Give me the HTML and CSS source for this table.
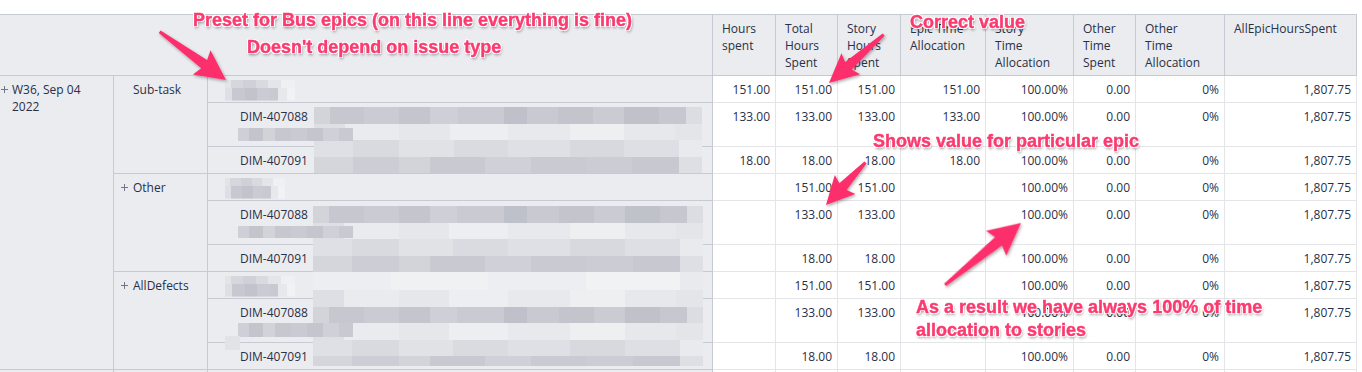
FILE: index.html
```html
<!DOCTYPE html>
<html lang="en">
<head>
<meta charset="utf-8">
<title>Epic hours report</title>
<link rel="stylesheet" href="styles.css">
</head>
<body>
<div class="page">
  <table class="grid">
    <colgroup>
      <col class="c-week"><col class="c-type"><col class="c-issue">
      <col class="c-hs"><col class="c-ths"><col class="c-shs"><col class="c-eta">
      <col class="c-sta"><col class="c-ots"><col class="c-ota"><col class="c-aeh">
    </colgroup>
    <thead>
      <tr>
        <th class="corner" colspan="3"><div class="hd"></div></th>
        <th><div class="hd">Hours<br>spent</div></th>
        <th><div class="hd">Total<br>Hours<br>Spent</div></th>
        <th><div class="hd">Story<br>Hours<br>Spent</div></th>
        <th><div class="hd">Epic Time<br>Allocation</div></th>
        <th><div class="hd">Story<br>Time<br>Allocation</div></th>
        <th><div class="hd">Other<br>Time<br>Spent</div></th>
        <th><div class="hd">Other<br>Time<br>Allocation</div></th>
        <th><div class="hd">AllEpicHoursSpent</div></th>
      </tr>
    </thead>
    <tbody>
      <tr>
        <td class="rh week" rowspan="9"><div class="lbl"><svg class="plus" width="7" height="7" viewBox="0 0 7 7"><path d="M3.5 0v7M0 3.5h7"/></svg><span>W36, Sep 04<br>2022</span></div></td>
        <td class="rh type" rowspan="3"><div class="lbl"><span class="nospace"></span><span>Sub-task</span></div></td>
        <td class="rh issue sum"><span class="smudge"></span></td>
        <td>151.00</td><td>151.00</td><td>151.00</td><td>151.00</td><td>100.00%</td><td>0.00</td><td>0%</td><td>1,807.75</td>
      </tr>
      <tr class="two">
        <td class="rh issue">DIM-407088<br>&nbsp;</td>
        <td>133.00</td><td>133.00</td><td>133.00</td><td>133.00</td><td>100.00%</td><td>0.00</td><td>0%</td><td>1,807.75</td>
      </tr>
      <tr>
        <td class="rh issue">DIM-407091</td>
        <td>18.00</td><td>18.00</td><td>18.00</td><td>18.00</td><td>100.00%</td><td>0.00</td><td>0%</td><td>1,807.75</td>
      </tr>
      <tr>
        <td class="rh type" rowspan="3"><div class="lbl"><svg class="plus" width="7" height="7" viewBox="0 0 7 7"><path d="M3.5 0v7M0 3.5h7"/></svg><span>Other</span></div></td>
        <td class="rh issue sum"><span class="smudge short"></span></td>
        <td></td><td>151.00</td><td>151.00</td><td></td><td>100.00%</td><td>0.00</td><td>0%</td><td>1,807.75</td>
      </tr>
      <tr class="two">
        <td class="rh issue">DIM-407088<br>&nbsp;</td>
        <td></td><td>133.00</td><td>133.00</td><td></td><td>100.00%</td><td>0.00</td><td>0%</td><td>1,807.75</td>
      </tr>
      <tr>
        <td class="rh issue">DIM-407091</td>
        <td></td><td>18.00</td><td>18.00</td><td></td><td>100.00%</td><td>0.00</td><td>0%</td><td>1,807.75</td>
      </tr>
      <tr>
        <td class="rh type" rowspan="3"><div class="lbl"><svg class="plus" width="7" height="7" viewBox="0 0 7 7"><path d="M3.5 0v7M0 3.5h7"/></svg><span>AllDefects</span></div></td>
        <td class="rh issue sum"><span class="smudge"></span></td>
        <td></td><td>151.00</td><td>151.00</td><td></td><td>100.00%</td><td>0.00</td><td>0%</td><td>1,807.75</td>
      </tr>
      <tr class="two">
        <td class="rh issue">DIM-407088<br>&nbsp;</td>
        <td></td><td>133.00</td><td>133.00</td><td></td><td>100.00%</td><td>0.00</td><td>0%</td><td>1,807.75</td>
      </tr>
      <tr>
        <td class="rh issue">DIM-407091</td>
        <td></td><td>18.00</td><td>18.00</td><td></td><td>100.00%</td><td>0.00</td><td>0%</td><td>1,807.75</td>
      </tr>
      <tr>
        <td class="rh week"></td>
        <td class="rh type"></td>
        <td class="rh issue"></td>
        <td></td><td></td><td></td><td></td><td></td><td></td><td></td><td></td>
      </tr>
    </tbody>
  </table>

  <!-- redaction overlays -->
  <div class="veil veil-a">
    <div class="band dark"></div><div class="band light"></div><div class="band soft"></div><div class="band mid"></div>
  </div>
  <div class="veil veil-b">
    <div class="band dark"></div><div class="band light"></div><div class="band soft"></div><div class="band mid"></div>
    <div class="band pale"></div><div class="band light"></div><div class="band dark"></div><div class="band light"></div><div class="band soft"></div><div class="band mid tail"></div>
  </div>
  <div class="line2 l2-a"></div>
  <div class="line2 l2-b"></div>
  <div class="line2 l2-c"></div>
  <div class="speck"></div>

  <!-- annotations -->
  <svg class="arrows" width="1362" height="372" viewBox="0 0 1362 372">
    <defs>
      <filter id="sh" x="-20%" y="-20%" width="140%" height="140%">
        <feDropShadow dx="1" dy="1.5" stdDeviation="1.4" flood-color="#000" flood-opacity="0.35"/>
      </filter>
    </defs>
    <g fill="#fd2f6c" filter="url(#sh)">
      <polygon transform="translate(226 80) rotate(36)" points="-82,-1.5 -27,-5 -30,-15 0,0 -30,15 -27,5 -82,1.5"/>
      <polygon transform="translate(829 83) rotate(138.5)" points="-73,-1.5 -26,-5 -29,-14 0,0 -29,14 -26,5 -73,1.5"/>
      <polygon transform="translate(826 205) rotate(132.9)" points="-58,-1.5 -25,-5 -28,-14 0,0 -28,14 -25,5 -58,1.5"/>
      <polygon transform="translate(1021 223) rotate(-39.2)" points="-98,-1.5 -29,-5.5 -32,-16 0,0 -32,16 -29,5.5 -98,1.5"/>
    </g>
  </svg>
  <div class="note n-preset">Preset for Bus epics (on this line everything is fine)</div>
  <div class="note n-depend">Doesn't depend on issue type</div>
  <div class="note n-correct">Correct value</div>
  <div class="note n-shows">Shows value for particular epic</div>
  <div class="note n-result">As a result we have always 100% of time<br>allocation to stories</div>
</div>
</body>
</html>
```
FILE: styles.css
```css
html, body {
  margin: 0;
  background: #ffffff;
}

body {
  font-family: "Open Sans", "Noto Sans", sans-serif;
  font-size: 12px;
  color: #283046;
}

.page {
  position: relative;
  width: 1362px;
  height: 372px;
  overflow: hidden;
  padding-top: 14px;
  box-sizing: border-box;
}

/* ---------- table ---------- */
.grid {
  border-collapse: separate;
  border-spacing: 0;
  table-layout: fixed;
  width: 1357px;
  border-top: 1px solid #c6cad2;
}

.c-week { width: 114px; }
.c-type { width: 94px; }
.c-issue { width: 505px; }
.c-hs { width: 63px; }
.c-ths { width: 62px; }
.c-shs { width: 63px; }
.c-eta { width: 85px; }
.c-sta { width: 88px; }
.c-ots { width: 62px; }
.c-ota { width: 89px; }
.c-aeh { width: 132px; }

.grid th,
.grid td {
  padding: 5px 5px 4px 5px;
  line-height: 17px;
  height: 17px;
  box-sizing: content-box;
  vertical-align: top;
  white-space: nowrap;
  overflow: hidden;
  text-align: right;
  font-weight: 400;
  border-right: 1px solid #e3e5e9;
  border-bottom: 1px solid #e3e5e9;
  background: #ffffff;
}

.grid th {
  background: #ebecf0;
  text-align: left;
  padding: 5px 4px 4px 9px;
  border-color: #c6cad2;
}

.grid th.corner {
  padding: 5px 0 4px 0;
}

.hd {
  height: 51px;
}

.grid td.rh {
  background: #ebecf0;
  text-align: left;
  border-color: #c6cad2;
}

.grid td.week {
  padding-left: 1px;
  border-right-color: #c6cad2;
}

.grid td.type {
  padding-left: 7px;
}

.grid td.issue {
  padding-left: 32px;
}

.grid td.issue.sum {
  padding-left: 17px;
}

.lbl {
  display: flex;
  align-items: flex-start;
  gap: 4px;
}

.type .lbl {
  gap: 5px;
}

.plus {
  flex: none;
  margin-top: 5px;
  stroke: #707686;
  stroke-width: 1;
  fill: none;
}

.nospace {
  width: 7px;
  flex: none;
}

/* small smudge for a summary row title */
.smudge {
  display: inline-block;
  width: 70px;
  height: 21px;
  margin: -1px 0 -3px;
  vertical-align: top;
  background:
    linear-gradient(90deg, #e3e4e8 0 8%, #d6d7dd 8% 26%, #d0d1d8 26% 45%, #d9dadf 45% 62%, #e4e5e9 62% 80%, #eff0f3 80%) top / 100% 40% no-repeat,
    linear-gradient(90deg, #dedfe4 0 10%, #c7c8d0 10% 28%, #c2c4cc 28% 46%, #cbccd3 46% 64%, #c8cad1 64% 76%, #e7e8ec 76% 88%, #f1f2f4 88%) bottom / 100% 60% no-repeat;
}

.smudge.short {
  width: 60px;
}

/* ---------- redaction overlays ---------- */
.veil {
  position: absolute;
  display: flex;
  flex-direction: column;
}

.veil-a {
  left: 314px;
  top: 107px;
  width: 388px;
}

.veil-b {
  left: 313px;
  top: 206px;
  width: 390px;
}

.band {
  height: 16.5px;
}

.band.tail {
  height: 10px;
}

.band.dark {
  background: linear-gradient(90deg,
    #d3d4da 0 4%, #c6c7cf 4% 13%, #cbccd3 13% 22%, #c4c5cd 22% 30%, #cfd0d7 30% 37%,
    #c9cad2 37% 49%, #bfc1ca 49% 55%, #c8c9d1 55% 63%, #c3c4cc 63% 72%, #cbccd3 72% 80%,
    #c0c2ca 80% 89%, #c6c7cf 89% 96%, #dcdde2 96%);
}

.band.light {
  background: linear-gradient(90deg,
    #dedfe4 0 8%, #eaebee 8% 22%, #e6e7eb 22% 35%, #edeef1 35% 50%, #e8e9ec 50% 66%,
    #eeeff1 66% 80%, #e7e8eb 80% 93%, #e4e5e9 93%);
}

.band.soft {
  background: linear-gradient(90deg,
    #dfe0e5 0 10%, #d9dae0 10% 22%, #e1e2e6 22% 36%, #dadbe1 36% 50%, #dfe0e5 50% 66%,
    #d8d9df 66% 80%, #dedfe4 80% 94%, #e9eaed 94%);
}

.band.mid {
  background: linear-gradient(90deg,
    #d5d6dc 0 10%, #cdced5 10% 22%, #d3d4da 22% 30%, #c8c9d1 30% 44%, #d0d1d8 44% 56%,
    #c9cad2 56% 70%, #cccdd4 70% 82%, #c7c8d0 82% 94%, #dedfe4 94%);
}

.band.pale {
  height: 18px;
  background: linear-gradient(90deg,
    #eceef1 0 20%, #f0f1f3 20% 45%, #edeef1 45% 70%, #f1f2f4 70% 94%, #e9eaee 94%);
}

.line2 {
  position: absolute;
  left: 238px;
  width: 115px;
  height: 13px;
  background: linear-gradient(90deg,
    #cfd0d7 0 10%, #c3c4cc 10% 22%, #d2d3d9 22% 32%, #c6c7cf 32% 46%, #cacbd2 46% 60%,
    #c4c5cd 60% 74%, #d0d1d8 74% 88%, #c9cad1 88%);
}

.l2-a { top: 128px; }
.l2-b { top: 226px; height: 12px; }
.l2-c { top: 323px; height: 14px; }

.speck {
  position: absolute;
  left: 225px;
  top: 336px;
  width: 15px;
  height: 14px;
  background: #e2e3e7;
}

/* ---------- annotations ---------- */
.arrows {
  position: absolute;
  left: 0;
  top: 0;
  pointer-events: none;
}

.note {
  position: absolute;
  font-family: "Liberation Sans", Arial, sans-serif;
  font-weight: 700;
  font-size: 18px;
  line-height: 23px;
  color: #fb3a70;
  -webkit-text-stroke: 0.4px #fb3a70;
  white-space: nowrap;
  text-shadow:
    1px 0 0 #fff, -1px 0 0 #fff, 0 1px 0 #fff, 0 -1px 0 #fff,
    1px 1px 0 #fff, -1px -1px 0 #fff, 1px -1px 0 #fff, -1px 1px 0 #fff,
    1px 2px 3px rgba(0, 0, 0, 0.45);
}

.n-preset { left: 193px; top: 9px; }
.n-depend { left: 247px; top: 36px; }
.n-correct { left: 910px; top: 11px; }
.n-shows { left: 873px; top: 130px; }
.n-result { left: 916px; top: 296px; }
```
